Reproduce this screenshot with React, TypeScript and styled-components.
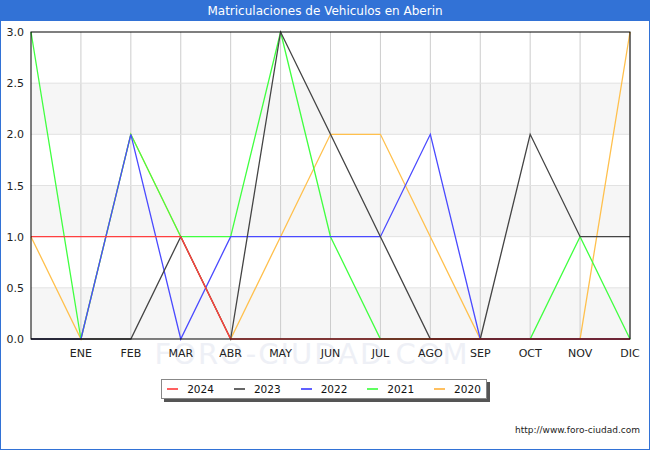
import React from "react";
import styled, { createGlobalStyle } from "styled-components";

const Global = createGlobalStyle`
  html, body { margin: 0; padding: 0; background: #fff; }
  body { font-family: "DejaVu Sans", sans-serif; }
`;

const Frame = styled.div`
  width: 648px; height: 448px; border: 1px solid #3272d6; background: #fff;
  display: flex; flex-direction: column; position: relative;
`;
const Title = styled.div`
  height: 20px; background: #3272d6; color: #fff; font-size: 12px;
  display: flex; align-items: center; justify-content: center;
`;
const LegendRow = styled.div`
  display: flex; justify-content: center; margin-top: 13px; padding-right: 2px;
`;
const Legend = styled.div`
  display: flex; align-items: center; gap: 20px; height: 18px; padding: 0 5px 0 5px;
  border: 1px solid #888; box-shadow: 3px 3px 0 #555; background: #fff; font-size: 10.5px; color: #111;
`;
const Item = styled.div`display: flex; align-items: center; gap: 9px;`;
const Swatch = styled.span<{ $c: string }>`
  width: 11px; height: 2px; background: ${p => p.$c}; display: inline-block;
`;
const Footer = styled.div`
  margin-top: 26px; text-align: right; padding-right: 9px; font-size: 9px; color: #222;
`;

const X0 = 31, DX = (630 - 31) / 12, Y0 = 338, DY = (338 - 31) / 3;
const months = ["ENE","FEB","MAR","ABR","MAY","JUN","JUL","AGO","SEP","OCT","NOV","DIC"];
const series: [string, number[]][] = [
  ["#ffc04d", [1,0,2,1,0,1,2,2,1,0,0,0,3]],
  ["#40ff40", [3,0,2,1,1,3,1,0,0,0,0,1,0]],
  ["#4a4aff", [0,0,2,0,1,1,1,1,2,0,0,0,0]],
  ["#444444", [0,0,0,1,0,3,2,1,0,0,2,1,1]],
  ["#ff4040", [1,1,1,1,0,0,0,0,0,0,0,0,0]],
];
const legend: [string, string][] = [["2024","#ff6060"],["2023","#666"],["2022","#6060ff"],["2021","#60ff60"],["2020","#ffc060"]];

function Chart() {
  return (
    <svg width={648} height={345} viewBox="1 20 648 345" style={{ display: "block" }}>
      {[0,1,2].map(i => <rect key={i} x={X0} y={Y0 - (i*2+1)*DY/2} width={599} height={DY/2} fill="#f6f6f6" />)}
      {months.map((_, i) => <line key={i} x1={X0+(i+1)*DX} x2={X0+(i+1)*DX} y1={31} y2={338} stroke="#ccc" />)}
      {[0.5,1,1.5,2,2.5].map(v => <line key={v} x1={X0} x2={630} y1={Y0-v*DY} y2={Y0-v*DY} stroke="#e2e2e2" />)}
      <text x={312} y={363} fontSize={29} fill="#eef0f6" textAnchor="middle" fontFamily="DejaVu Sans" letterSpacing={2}>FORO-CIUDAD.COM</text>
      {series.map(([c, d]) => (
        <polyline key={c} fill="none" stroke={c} strokeWidth={1.3}
          points={d.map((v, i) => `${X0+i*DX},${Y0-v*DY}`).join(" ")} />
      ))}
      <rect x={X0} y={31} width={599} height={307} fill="none" stroke="#000" />
      {[0,0.5,1,1.5,2,2.5,3].map(v => <text key={v} x={24} y={Y0-v*DY+4} fontSize={11} textAnchor="end" fill="#222">{v.toFixed(1)}</text>)}
      {months.map((m, i) => <text key={m} x={X0+(i+1)*DX} y={356} fontSize={11} textAnchor="middle" fill="#222">{m}</text>)}
    </svg>
  );
}

export default function App() {
  return (
    <>
      <Global />
      <Frame>
        <Title>Matriculaciones de Vehiculos en Aberin</Title>
        <Chart />
        <LegendRow>
          <Legend>
            {legend.map(([l, c]) => <Item key={l}><Swatch $c={c} />{l}</Item>)}
          </Legend>
        </LegendRow>
        <Footer>http://www.foro-ciudad.com</Footer>
      </Frame>
    </>
  );
}
